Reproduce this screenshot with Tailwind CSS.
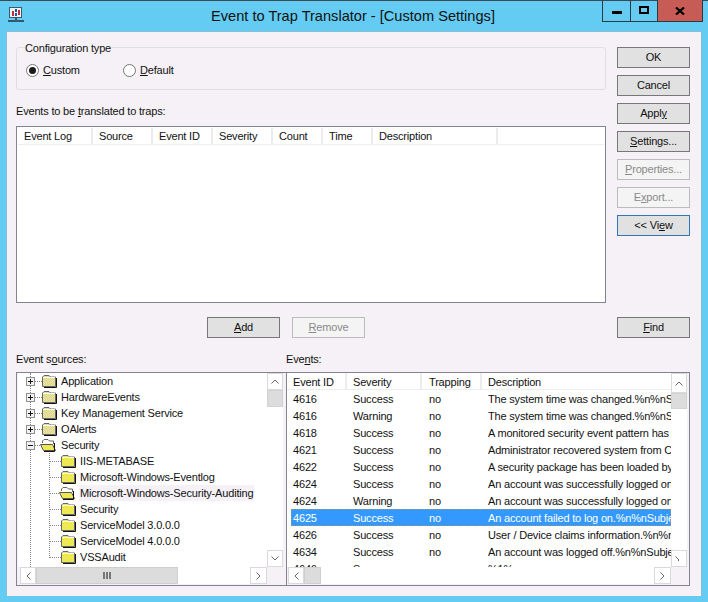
<!DOCTYPE html>
<html lang="en">
<head>
<meta charset="UTF-8" />
<title>Event to Trap Translator</title>
<script src="https://cdn.jsdelivr.net/npm/@tailwindcss/browser@4"></script>
</head>
<body class="m-0 w-[708px] h-[602px] overflow-hidden bg-[#64cbf2] font-['Liberation_Sans',sans-serif] text-[11px] leading-[13px] tracking-[-0.18px] text-[#111]">
  <svg class="block" width="0" height="0">
    <defs>
      <pattern id="dither" width="2" height="2" patternUnits="userSpaceOnUse"><rect width="2" height="2" fill="#f6f000"/><rect width="1" height="1" fill="#e4e2a0"/><rect x="1" y="1" width="1" height="1" fill="#e4e2a0"/></pattern>
      <pattern id="dither-pale" width="2" height="2" patternUnits="userSpaceOnUse"><rect width="2" height="2" fill="#f0e88a"/><rect width="1" height="1" fill="#d8d2a8"/><rect x="1" y="1" width="1" height="1" fill="#d8d2a8"/></pattern>
      <symbol id="folder" viewBox="0 0 16 14">
        <path d="M0.500 12.500V3L2 1.500H7L8.500 3H13.500V12.500Z" fill="url(#dither)" stroke="#666"/>
        <path d="M1 3.500H13" stroke="#fff"/>
        <path d="M14.500 4V13.500H2" fill="none" stroke="#111"/>
      </symbol>
      <symbol id="folder-pale" viewBox="0 0 16 14">
        <path d="M0.500 12.500V3L2 1.500H7L8.500 3H13.500V12.500Z" fill="url(#dither-pale)" stroke="#666"/>
        <path d="M1 3.500H13" stroke="#fff"/>
        <path d="M14.500 4V13.500H2" fill="none" stroke="#111"/>
      </symbol>
      <symbol id="folder-open" viewBox="0 0 18 14">
        <path d="M2.500 5V3L4 1.500H8L9.500 3H13.500V6" fill="#fff" stroke="#666"/>
        <path d="M0.500 6.500H12.500L15.500 12.500H3.500Z" fill="url(#dither)" stroke="#555"/>
        <path d="M14.500 5V13.500H4" fill="none" stroke="#111"/>
      </symbol>
      <symbol id="plus" viewBox="0 0 9 9"><rect x="0.500" y="0.500" width="8" height="8" fill="#f2f2f2" stroke="#909090"/><path d="M2 4.500H7M4.500 2V7" stroke="#111"/></symbol>
      <symbol id="minus" viewBox="0 0 9 9"><rect x="0.500" y="0.500" width="8" height="8" fill="#f2f2f2" stroke="#909090"/><path d="M2 4.500H7" stroke="#111"/></symbol>
    </defs>
  </svg>

  <div class="h-px bg-[#3a4a52]"></div>
  <header class="relative h-[30px] flex items-center justify-center text-[14.6px] tracking-normal text-[#111] pr-[2px]">
    <svg class="absolute left-[8px] top-[6px]" width="17" height="16" viewBox="0 0 17 16">
      <rect x="1.500" y="0.500" width="12" height="10" fill="#eef2f5" stroke="#3a5a70"/>
      <rect x="4" y="4" width="2" height="5" fill="#c03030"/><rect x="7" y="2" width="2" height="3" fill="#2050b0"/><rect x="10" y="3" width="2" height="5" fill="#c03030"/>
      <rect x="7" y="6" width="2" height="3" fill="#2050b0"/>
      <path d="M8 11v2M0 14h16" stroke="#33586e" stroke-width="2"/>
    </svg>
    Event to Trap Translator - [Custom Settings]
    <div class="absolute right-[5px] top-[-1px] flex h-[22px] border border-t-0 border-[#2c3a42]">
      <div class="w-[28px] flex items-center justify-center border-r border-[#2c3a42]"><span class="block w-[10px] h-[3px] mt-[4px] bg-black"></span></div>
      <div class="w-[26px] flex items-center justify-center"><span class="block w-[10px] h-[8px] mb-[1px] border-2 border-black"></span></div>
      <div class="w-[45px] flex items-center justify-center bg-[#c75b55] border-l border-[#2c3a42]">
        <svg width="10" height="8" viewBox="0 0 10 8"><path d="M1 0.500 9 7.500M9 0.500 1 7.500" stroke="#000" stroke-width="2.200"/></svg>
      </div>
    </div>
  </header>

  <main class="mx-[6px] h-[565px] bg-[#f5f1f6] border border-b-0 border-[#86bddb] pt-[15px] pl-[9px] pr-[10px]">
    <div class="flex gap-[11px]">
      <div class="w-[590px]">
        <fieldset class="h-[43px] border border-[#dcdfe4] rounded-[3px] pl-[9px]">
          <legend class="absolute mt-[-6px] ml-[-1px] bg-[#f5f1f6]">Configuration type</legend>
          <div class="flex pt-[16px]">
            <label class="w-[97px] flex items-center gap-[4px]">
              <span class="w-[13px] h-[13px] rounded-full border border-[#777] bg-white flex items-center justify-center"><span class="w-[7px] h-[7px] rounded-full bg-[#1a1a1a]"></span></span>
              <span><u>C</u>ustom</span>
            </label>
            <label class="flex items-center gap-[4px]">
              <span class="w-[13px] h-[13px] rounded-full border border-[#777] bg-white"></span>
              <span><u>D</u>efault</span>
            </label>
          </div>
        </fieldset>
        <p class="mt-[15px] h-[21px]">Events to be <u>t</u>ranslated to traps:</p>
        <div class="h-[177px] border border-[#82848f] bg-white p-px">
          <div class="flex h-[17px] items-center border-b border-[#eeeeee]">
            <div class="w-[75px] pl-[6px] h-full flex items-center border-r-2 border-[#ececec]">Event Log</div>
            <div class="w-[60px] pl-[6px] h-full flex items-center border-r-2 border-[#ececec]">Source</div>
            <div class="w-[60px] pl-[6px] h-full flex items-center border-r-2 border-[#ececec]">Event ID</div>
            <div class="w-[60px] pl-[6px] h-full flex items-center border-r-2 border-[#ececec]">Severity</div>
            <div class="w-[50px] pl-[6px] h-full flex items-center border-r-2 border-[#ececec]">Count</div>
            <div class="w-[50px] pl-[6px] h-full flex items-center border-r-2 border-[#ececec]">Time</div>
            <div class="w-[125px] pl-[6px] h-full flex items-center border-r-2 border-[#ececec]">Description</div>
          </div>
        </div>
        <div class="flex gap-[12px] mt-[14px] ml-[191px]">
          <button class="w-[73px] h-[21px] border border-[#777] bg-[#e1e1e1]"><u>A</u>dd</button>
          <button class="w-[73px] h-[21px] border border-[#bcbcbc] bg-[#f4f4f4] text-[#8a8a8a]"><u>R</u>emove</button>
        </div>
      </div>
      <div class="w-[73px] flex flex-col gap-[7px]">
        <button class="h-[21px] border border-[#777] bg-[#e1e1e1]">OK</button>
        <button class="h-[21px] border border-[#777] bg-[#e1e1e1]">Cancel</button>
        <button class="h-[21px] border border-[#777] bg-[#e1e1e1]">Appl<u>y</u></button>
        <button class="h-[21px] border border-[#777] bg-[#e1e1e1]"><u>S</u>ettings...</button>
        <button class="h-[21px] border border-[#bcbcbc] bg-[#f4f4f4] text-[#8a8a8a]"><u>P</u>roperties...</button>
        <button class="h-[21px] border border-[#bcbcbc] bg-[#f4f4f4] text-[#8a8a8a]">E<u>x</u>port...</button>
        <button class="h-[21px] border border-[#2f78b8] bg-[#e1e1e1]">&lt;&lt; Vi<u>e</u>w</button>
        <button class="h-[21px] border border-[#777] bg-[#e1e1e1] mt-auto"><u>F</u>ind</button>
      </div>
    </div>

    <div class="flex mt-[15px] h-[19px]">
      <p class="w-[270px]">Event s<u>o</u>urces:</p>
      <p>Eve<u>n</u>ts:</p>
    </div>
    <div class="flex">
      <!-- tree -->
      <div class="w-[270px] h-[214px] border border-r-0 border-[#82848f] pl-px pr-[3px] flex flex-col">
        <div class="flex h-[194px]">
          <div class="relative flex-1 overflow-hidden bg-white">
            <span class="absolute left-[12px] top-0 h-full border-l border-dotted border-[#888]"></span>
            <span class="absolute left-[31px] top-[80px] h-[105px] border-l border-dotted border-[#888]"></span>

            <div class="relative flex items-center h-[16px]"><svg class="ml-[8px]" width="9" height="9"><use href="#plus"/></svg><span class="w-[7px] border-t border-dotted border-[#888]"></span><svg class="mr-[3px]" width="16" height="14"><use href="#folder-pale"/></svg>Application</div>
            <div class="relative flex items-center h-[16px]"><svg class="ml-[8px]" width="9" height="9"><use href="#plus"/></svg><span class="w-[7px] border-t border-dotted border-[#888]"></span><svg class="mr-[3px]" width="16" height="14"><use href="#folder-pale"/></svg>HardwareEvents</div>
            <div class="relative flex items-center h-[16px]"><svg class="ml-[8px]" width="9" height="9"><use href="#plus"/></svg><span class="w-[7px] border-t border-dotted border-[#888]"></span><svg class="mr-[3px]" width="16" height="14"><use href="#folder-pale"/></svg>Key Management Service</div>
            <div class="relative flex items-center h-[16px]"><svg class="ml-[8px]" width="9" height="9"><use href="#plus"/></svg><span class="w-[7px] border-t border-dotted border-[#888]"></span><svg class="mr-[3px]" width="16" height="14"><use href="#folder-pale"/></svg>OAlerts</div>
            <div class="relative flex items-center h-[16px]"><svg class="ml-[8px]" width="9" height="9"><use href="#minus"/></svg><span class="w-[5px] border-t border-dotted border-[#888]"></span><svg class="mr-[3px]" width="18" height="14"><use href="#folder-open"/></svg>Security</div>

            <div class="relative flex items-center h-[16px] pl-[31px]"><span class="w-[12px] border-t border-dotted border-[#888]"></span><svg class="mr-[3px]" width="16" height="14"><use href="#folder"/></svg>IIS-METABASE</div>
            <div class="relative flex items-center h-[16px] pl-[31px]"><span class="w-[12px] border-t border-dotted border-[#888]"></span><svg class="mr-[3px]" width="16" height="14"><use href="#folder"/></svg>Microsoft-Windows-Eventlog</div>
            <div class="relative flex items-center h-[16px] pl-[31px]"><span class="w-[10px] border-t border-dotted border-[#888]"></span><svg class="mr-[2px]" width="18" height="14"><use href="#folder-open"/></svg><span class="h-[16px] leading-[16px] px-[1px] bg-[#f5f1f6]">Microsoft-Windows-Security-Auditing</span></div>
            <div class="relative flex items-center h-[16px] pl-[31px]"><span class="w-[12px] border-t border-dotted border-[#888]"></span><svg class="mr-[3px]" width="16" height="14"><use href="#folder"/></svg>Security</div>
            <div class="relative flex items-center h-[16px] pl-[31px]"><span class="w-[12px] border-t border-dotted border-[#888]"></span><svg class="mr-[3px]" width="16" height="14"><use href="#folder"/></svg>ServiceModel 3.0.0.0</div>
            <div class="relative flex items-center h-[16px] pl-[31px]"><span class="w-[12px] border-t border-dotted border-[#888]"></span><svg class="mr-[3px]" width="16" height="14"><use href="#folder"/></svg>ServiceModel 4.0.0.0</div>
            <div class="relative flex items-center h-[16px] pl-[31px]"><span class="w-[12px] border-t border-dotted border-[#888]"></span><svg class="mr-[3px]" width="16" height="14"><use href="#folder"/></svg>VSSAudit</div>
            <div class="relative flex items-center h-[16px]"><svg class="ml-[8px]" width="9" height="9"><use href="#plus"/></svg><span class="w-[7px] border-t border-dotted border-[#888]"></span><svg class="mr-[3px]" width="16" height="14"><use href="#folder-pale"/></svg></div>
          </div>
          <!-- tree vertical scrollbar -->
          <div class="w-[16px] flex flex-col bg-white">
            <div class="h-[17px] border border-[#d9d9d9] flex items-center justify-center"><svg width="8" height="5" viewBox="0 0 8 5"><path d="M0.500 4.500 4 1 7.500 4.500" fill="none" stroke="#666"/></svg></div>
            <div class="h-[17px] bg-[#dcdcdc] border border-[#d2d2d2]"></div>
            <div class="flex-1"></div>
            <div class="h-[17px] border border-[#d9d9d9] flex items-center justify-center"><svg width="8" height="5" viewBox="0 0 8 5"><path d="M0.500 0.500 4 4 7.500 0.500" fill="none" stroke="#666"/></svg></div>
          </div>
        </div>
        <!-- tree horizontal scrollbar -->
        <div class="h-[17px] ml-[2px] mr-[16px] flex bg-white">
          <div class="w-[16px] border border-[#d9d9d9] flex items-center justify-center"><svg width="5" height="8" viewBox="0 0 5 8"><path d="M4.500 0.500 1 4 4.500 7.500" fill="none" stroke="#666"/></svg></div>
          <div class="w-[142px] bg-[#dcdcdc] border border-[#cfcfcf] flex items-center justify-center"><svg width="8" height="7" viewBox="0 0 8 7"><path d="M1 0v7M4 0v7M7 0v7" stroke="#555" stroke-width="1.500"/></svg></div>
          <div class="flex-1"></div>
          <div class="w-[17px] border border-[#d9d9d9] flex items-center justify-center"><svg width="5" height="8" viewBox="0 0 5 8"><path d="M0.500 0.500 4 4 0.500 7.500" fill="none" stroke="#666"/></svg></div>
        </div>
      </div>
      <!-- events -->
      <div class="w-[404px] h-[214px] border border-[#82848f] pr-[2px] flex flex-col">
        <div class="flex h-[194px]">
          <div class="w-[384px] bg-white overflow-hidden">
            <div class="flex h-[17px] items-center border-b border-[#eeeeee]">
              <div class="w-[60px] pl-[6px] pt-[2px] h-full flex items-center border-r-2 border-[#ececec]">Event ID</div>
              <div class="w-[75px] pl-[6px] pt-[2px] h-full flex items-center border-r-2 border-[#ececec]">Severity</div>
              <div class="w-[60px] pl-[7px] pt-[2px] h-full flex items-center border-r-2 border-[#ececec]">Trapping</div>
              <div class="flex-1 pl-[6px] pt-[2px] h-full flex items-center">Description</div>
            </div>
            <ul class="ml-[4px] whitespace-nowrap">
              <li class="flex h-[17px] pt-[2px] items-center"><span class="w-[60px] pl-[2px]">4616</span><span class="w-[76px] pl-[2px]">Success</span><span class="w-[59px] pl-[2px]">no</span><span class="flex-1 pl-[2px] overflow-hidden">The system time was changed.%n%nSubject:</span></li>
              <li class="flex h-[17px] pt-[2px] items-center"><span class="w-[60px] pl-[2px]">4616</span><span class="w-[76px] pl-[2px]">Warning</span><span class="w-[59px] pl-[2px]">no</span><span class="flex-1 pl-[2px] overflow-hidden">The system time was changed.%n%nSubject:</span></li>
              <li class="flex h-[17px] pt-[2px] items-center"><span class="w-[60px] pl-[2px]">4618</span><span class="w-[76px] pl-[2px]">Success</span><span class="w-[59px] pl-[2px]">no</span><span class="flex-1 pl-[2px] overflow-hidden">A monitored security event pattern has occurred</span></li>
              <li class="flex h-[17px] pt-[2px] items-center"><span class="w-[60px] pl-[2px]">4621</span><span class="w-[76px] pl-[2px]">Success</span><span class="w-[59px] pl-[2px]">no</span><span class="flex-1 pl-[2px] overflow-hidden">Administrator recovered system from CrashOnAudit</span></li>
              <li class="flex h-[17px] pt-[2px] items-center"><span class="w-[60px] pl-[2px]">4622</span><span class="w-[76px] pl-[2px]">Success</span><span class="w-[59px] pl-[2px]">no</span><span class="flex-1 pl-[2px] overflow-hidden">A security package has been loaded by the</span></li>
              <li class="flex h-[17px] pt-[2px] items-center"><span class="w-[60px] pl-[2px]">4624</span><span class="w-[76px] pl-[2px]">Success</span><span class="w-[59px] pl-[2px]">no</span><span class="flex-1 pl-[2px] overflow-hidden">An account was successfully logged on.%n%n</span></li>
              <li class="flex h-[17px] pt-[2px] items-center"><span class="w-[60px] pl-[2px]">4624</span><span class="w-[76px] pl-[2px]">Warning</span><span class="w-[59px] pl-[2px]">no</span><span class="flex-1 pl-[2px] overflow-hidden">An account was successfully logged on.%n%n</span></li>
              <li class="flex h-[17px] pt-[2px] items-center bg-[#3399ff] text-white outline-1 outline-dotted outline-offset-[-1px] outline-[#c8905a]/70"><span class="w-[60px] pl-[2px]">4625</span><span class="w-[76px] pl-[2px]">Success</span><span class="w-[59px] pl-[2px]">no</span><span class="flex-1 pl-[2px] overflow-hidden">An account failed to log on.%n%nSubject:</span></li>
              <li class="flex h-[17px] pt-[2px] items-center"><span class="w-[60px] pl-[2px]">4626</span><span class="w-[76px] pl-[2px]">Success</span><span class="w-[59px] pl-[2px]">no</span><span class="flex-1 pl-[2px] overflow-hidden">User / Device claims information.%n%nSubject:</span></li>
              <li class="flex h-[17px] pt-[2px] items-center"><span class="w-[60px] pl-[2px]">4634</span><span class="w-[76px] pl-[2px]">Success</span><span class="w-[59px] pl-[2px]">no</span><span class="flex-1 pl-[2px] overflow-hidden">An account was logged off.%n%nSubject:</span></li>
              <li class="flex h-[17px] pt-[2px] items-center"><span class="w-[60px] pl-[2px]">4646</span><span class="w-[76px] pl-[2px]">Success</span><span class="w-[59px] pl-[2px]">no</span><span class="flex-1 pl-[2px] overflow-hidden">%1%</span></li>
            </ul>
          </div>
          <!-- events vertical scrollbar -->
          <div class="w-[16px] flex flex-col bg-white">
            <div class="h-[20px] border border-[#d9d9d9] flex items-center justify-center"><svg width="8" height="5" viewBox="0 0 8 5"><path d="M0.500 4.500 4 1 7.500 4.500" fill="none" stroke="#666"/></svg></div>
            <div class="h-[16px] bg-[#dcdcdc] border border-[#d2d2d2]"></div>
            <div class="flex-1"></div>
            <div class="h-[17px] border border-[#d9d9d9] flex items-center justify-center"><svg width="8" height="5" viewBox="0 0 8 5"><path d="M0.500 0.500 4 4 0.500 7.500" fill="none" stroke="#666"/></svg></div>
          </div>
        </div>
        <!-- events horizontal scrollbar -->
        <div class="h-[17px] ml-px mr-[16px] flex bg-white">
          <div class="w-[16px] border border-[#d9d9d9] flex items-center justify-center"><svg width="5" height="8" viewBox="0 0 5 8"><path d="M4.500 0.500 1 4 4.500 7.500" fill="none" stroke="#666"/></svg></div>
          <div class="w-[17px] bg-[#dcdcdc] border border-[#cfcfcf]"></div>
          <div class="flex-1"></div>
          <div class="w-[17px] border border-[#d9d9d9] flex items-center justify-center"><svg width="5" height="8" viewBox="0 0 5 8"><path d="M0.500 0.500 4 4 0.500 7.500" fill="none" stroke="#666"/></svg></div>
        </div>
      </div>
    </div>
  </main>
</body>
</html>
